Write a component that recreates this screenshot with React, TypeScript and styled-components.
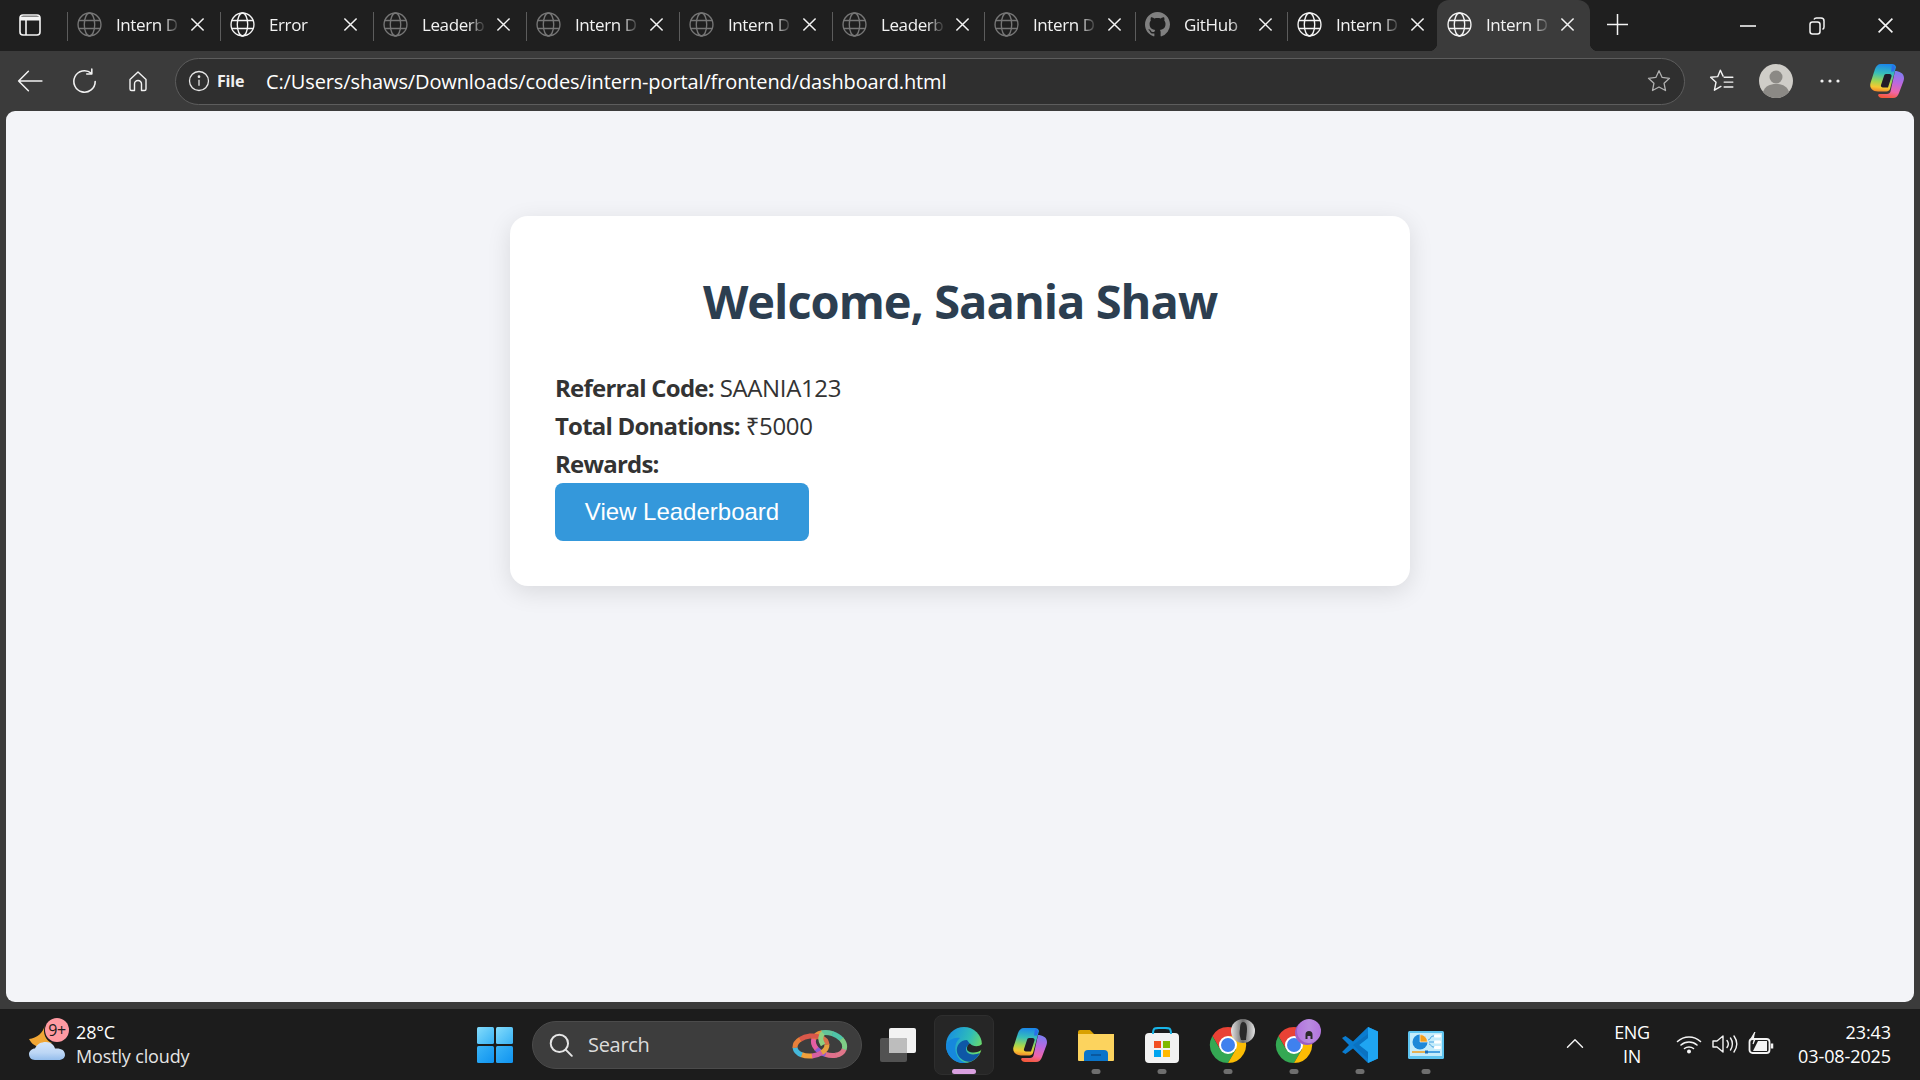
import React from "react";
import styled, { createGlobalStyle } from "styled-components";

const Global = createGlobalStyle`
  html, body { margin: 0; padding: 0; width: 1920px; height: 1080px; overflow: hidden; background: #3b3b3b; }
  * { box-sizing: border-box; }
  body { font-family: "Open Sans", "Noto Sans", sans-serif; }
`;

const Frame = styled.div`
  width: 1920px; height: 1080px; display: flex; flex-direction: column; background: #3b3b3b;
`;
const TabStrip = styled.div`
  height: 51px; flex: none; background: #1f1f1f; display: flex; align-items: stretch; color: #fff;
`;
const WindowMenu = styled.div`
  width: 67px; flex: none; display: flex; align-items: center; justify-content: center; padding: 0 7px 2px 0;
`;
const Tab = styled.div<{ $active?: boolean; $width: number }>`
  position: relative; width: ${(p) => p.$width}px; flex: none; display: flex; align-items: center; padding: 0 0 3px 10px;
  background: ${(p) => (p.$active ? "#3b3b3b" : "transparent")};
  border-radius: ${(p) => (p.$active ? "12px 12px 0 0" : "0")};
  &::before { content: ""; position: absolute; top: 12px; height: 29px; left: 0; width: 1px; background: #5c5c5c; }
  ${(p) => p.$active && `
    &::before { top: auto; height: 8px; bottom: 0; left: -8px; width: 8px; background: radial-gradient(circle at 0 0, transparent 8px, #3b3b3b 8.5px); }
    &::after { content: ""; position: absolute; bottom: 0; right: -8px; width: 8px; height: 8px; background: radial-gradient(circle at 100% 0, transparent 8px, #3b3b3b 8.5px); }
  `}
`;
const TabTitle = styled.span`
  margin-left: 14px; width: 66px; flex: none; white-space: nowrap; font-size: 17px; letter-spacing: -0.4px; color: #f2f2f2;
  -webkit-mask-image: linear-gradient(90deg, #000 70%, rgba(0, 0, 0, 0.18) 92%);
  mask-image: linear-gradient(90deg, #000 70%, rgba(0, 0, 0, 0.18) 92%);
`;
const TabClose = styled.span`
  margin-left: 5px; display: flex; width: 20px; justify-content: center;
`;
const PlusButton = styled.div`
  width: 50px; margin-left: 2px; display: flex; align-items: center; justify-content: center; padding-bottom: 3px;
`;
const WindowButtons = styled.div`
  margin-left: auto; display: flex;
`;
const WindowButton = styled.div`
  width: 69px; display: flex; align-items: center; justify-content: center;
`;
const Toolbar = styled.div`
  height: 60px; flex: none; background: #3b3b3b; display: flex; align-items: center; padding-left: 3px; color: #fff;
`;
const ToolButton = styled.div`
  width: 54px; height: 47px; flex: none; display: flex; align-items: center; justify-content: center;
`;
const CopilotButton = styled(ToolButton)`
  margin-left: 3px;
`;
const AddressBar = styled.div`
  width: 1510px; height: 47px; margin: 0 10px; flex: none; border: 1.5px solid #5d5d5d; border-radius: 24px; background: #2f2f2f;
  display: flex; align-items: center; padding: 0 12px 0 12px;
`;
const FileChip = styled.span`
  font-size: 16px; font-weight: 700; letter-spacing: -0.2px; margin-left: 7px; width: 49px; color: #f0f0f0;
`;
const Url = styled.span`
  font-size: 20px; letter-spacing: -0.12px; color: #fff; white-space: nowrap; flex: 1;
`;
const Content = styled.main`
  flex: none; height: 891px; margin: 0 6px; background: #f3f4f8; border-radius: 9px; padding-top: 105px;
`;
const Card = styled.section`
  width: 900px; height: 370px; margin: 0 auto; background: #fff; border-radius: 18px; padding: 45px;
  box-shadow: 0 6px 24px rgba(0, 0, 0, 0.11);
`;
const Title = styled.h1`
  margin: 0 0 28px; height: 80px; line-height: 80px; text-align: center; font-size: 47px; font-weight: 700; color: #2c3e50; letter-spacing: -1px;
`;
const InfoRow = styled.p`
  margin: 0; height: 38px; line-height: 38px; font-size: 24px; color: #333; letter-spacing: -0.36px; font-weight: 400;
  strong { font-weight: 700; letter-spacing: -0.78px; }
`;
const PrimaryButton = styled.button`
  display: block; width: 254px; height: 58px; border: 0; border-radius: 8px; background: #3498db; color: #fff; padding: 0;
  font-family: "Liberation Sans", Arial, sans-serif; font-size: 24px;
`;
const Taskbar = styled.footer`
  margin-top: 7px; height: 71px; flex: none; background: #1c1c1c; display: flex; align-items: center; color: #fff;
`;
const Weather = styled.div`
  width: 461px; flex: none; display: flex; align-items: center; padding-left: 28px; position: relative; margin-top: -2px;
`;
const WeatherBadge = styled.span`
  position: absolute; left: 45px; top: -2px; width: 24px; height: 24px; border-radius: 50%; background: #ff9aa2; color: #1c1c1c;
  font-size: 16px; line-height: 24px; text-align: center; letter-spacing: -0.5px;
`;
const WeatherText = styled.div`
  margin-left: 10px; display: flex; flex-direction: column; font-size: 18px; line-height: 24px; letter-spacing: -0.15px;
  span + span { color: #e4e4e4; }
`;
const TaskTile = styled.div<{ $active?: boolean; $running?: string }>`
  position: relative; width: 66px; height: 60px; flex: none; display: flex; align-items: center; justify-content: center;
  &::before { content: ""; position: absolute; left: 3px; right: 3px; top: 0; bottom: 0; border-radius: 8px;
    background: ${(p) => (p.$active ? "#262626" : "transparent")}; border: ${(p) => (p.$active ? "1px solid #2e2e2e" : "none")}; }
  &::after { content: ""; position: absolute; bottom: 1px; left: 50%; height: 5px; border-radius: 3px; transform: translateX(-50%);
    width: ${(p) => (p.$active ? "24px" : p.$running ? "9px" : "0")}; background: ${(p) => p.$running || "transparent"}; }
  > svg { position: relative; z-index: 1; }
`;
const StartTile = styled(TaskTile)`
  padding-left: 1px;
`;
const SearchBox = styled.div`
  width: 330px; height: 48px; margin: 0 3px 0 5px; flex: none; background: #3d3d3d; border: 1px solid #4b4b4b; border-radius: 24px;
  display: flex; align-items: center; padding: 0 13px 0 15px; color: #dcdcdc; font-size: 20px; letter-spacing: -0.3px;
`;
const SearchLabel = styled.span`
  margin-left: 14px; flex: 1;
`;
const Tray = styled.div`
  margin-left: auto; display: flex; align-items: center; padding-right: 29px; margin-top: -2px;
`;
const TrayIcon = styled.div`
  width: 36px; display: flex; justify-content: center;
`;
const Chevron = styled(TrayIcon)`
  margin-right: 9px;
`;
const Lang = styled.div`
  width: 60px; margin-right: 9px; text-align: center; font-size: 18px; line-height: 24px; letter-spacing: -0.3px;
`;
const Clock = styled.div`
  margin-left: 16px; width: 96px; text-align: right; font-size: 18px; line-height: 24px; letter-spacing: -0.1px; white-space: nowrap;
`;

const Globe = ({ dim }: { dim?: boolean }) => (
  <svg width="25" height="25" viewBox="0 0 24 24" fill="none" stroke={dim ? "#767676" : "#f4f4f4"} strokeWidth="1.3">
    <circle cx="12" cy="12" r="11" />
    <ellipse cx="12" cy="12" rx="5" ry="11" />
    <path d="M1.6 8.2h20.8M1.6 15.8h20.8" />
  </svg>
);
const GitHubMark = () => (
  <svg width="25" height="25" viewBox="0 0 16 16" fill="#808080">
    <path d="M8 0C3.58 0 0 3.58 0 8c0 3.54 2.29 6.53 5.47 7.59.4.07.55-.17.55-.38 0-.19-.01-.82-.01-1.49-2.01.37-2.53-.49-2.69-.94-.09-.23-.48-.94-.82-1.13-.28-.15-.68-.52-.01-.53.63-.01 1.08.58 1.23.82.72 1.21 1.87.87 2.33.66.07-.52.28-.87.51-1.07-1.78-.2-3.64-.89-3.64-3.95 0-.87.31-1.59.82-2.15-.08-.2-.36-1.02.08-2.12 0 0 .67-.21 2.2.82.64-.18 1.32-.27 2-.27s1.36.09 2 .27c1.53-1.04 2.2-.82 2.2-.82.44 1.1.16 1.92.08 2.12.51.56.82 1.27.82 2.15 0 3.07-1.87 3.75-3.65 3.95.29.25.54.73.54 1.48 0 1.07-.01 1.93-.01 2.2 0 .21.15.46.55.38A8.01 8.01 0 0 0 16 8c0-4.42-3.58-8-8-8z" />
  </svg>
);
const Cross = ({ s = 15, w = 1.6 }: { s?: number; w?: number }) => (
  <svg width={s} height={s} viewBox="0 0 16 16" stroke="#f4f4f4" strokeWidth={w} fill="none"><path d="M1.5 1.5l13 13M14.5 1.5l-13 13" /></svg>
);
const Line = ({ children, w = 24, sw = 1.5, c = "#f2f2f2" }: { children: React.ReactNode; w?: number; sw?: number; c?: string }) => (
  <svg width={w} height={w} viewBox="0 0 24 24" fill="none" stroke={c} strokeWidth={sw} strokeLinecap="round" strokeLinejoin="round">{children}</svg>
);
const Copilot = ({ s = 36, id }: { s?: number; id: string }) => (
  <svg width={s} height={s} viewBox="0 0 36 36">
    <defs>
      <linearGradient id={id + "a"} x1="0.5" y1="0" x2="0.4" y2="1">
        <stop offset="0" stopColor="#1b87ea" /><stop offset="0.35" stopColor="#38bfb8" /><stop offset="0.65" stopColor="#a6d64e" /><stop offset="0.85" stopColor="#f6c832" /><stop offset="1" stopColor="#f28a2c" />
      </linearGradient>
      <linearGradient id={id + "b"} x1="0.6" y1="0" x2="0.4" y2="1">
        <stop offset="0" stopColor="#7d7df0" /><stop offset="0.4" stopColor="#bb68e0" /><stop offset="0.75" stopColor="#f066a8" /><stop offset="1" stopColor="#f4593c" />
      </linearGradient>
    </defs>
    <path d="M12 1h11c2 0 3.500 1 4 3l-6 22c-.5 1.500-2 2.500-3.500 2.500H9C4 28.500 0 25 1.500 20L6 6c1-3 3-5 6-5z" fill={`url(#${id}a)`} />
    <path d="M26 8c4 0 9 2 9 7 0 1-.2 2-.5 3L30 30c-1 3-3 5-6 5H13c-2 0-3.500-1-4-3l1-1h8c2 0 3-1 3.500-2.500z" fill={`url(#${id}b)`} />
    <path d="M23 2c2 .5 3 1.500 3 3l-1 3.500h-3z" fill="#2a6fe8" />
    <path d="M15 13l-3 9c-.5 1.500.5 2.500 2 2.500h5l3.500-11c.4-1.500-.5-2.500-2-2.500h-3.500c-1 0-1.700.8-2 2z" fill="#211a27" />
  </svg>
);
const EdgeLogo = () => (
  <svg width="36" height="36" viewBox="0 0 36 36">
    <defs>
      <linearGradient id="edgeA" x1="0.1" y1="0.2" x2="1" y2="0.6"><stop offset="0" stopColor="#1a94dd" /><stop offset="0.55" stopColor="#2fbdb8" /><stop offset="1" stopColor="#74dd5e" /></linearGradient>
    </defs>
    <circle cx="18" cy="18" r="18" fill="url(#edgeA)" />
    <path d="M0 18C2 13 8 10 14 11 10 14 8 20 10 26 12 32 16 35 21 36 9 37.500 0 29 0 18z" fill="#1688dd" />
    <path d="M21 13C14 13 10 19 11 25 12 31 19 36 25 34.500 29 33 32 30 34 26 29 28 23 28 21 25 19 22 20 19 24 17z" fill="#0e57a6" />
    <path d="M24 16.500C21 18 20 22 22 24 26 26.500 32 26 36 22.500L36 17C33 20 27 20 24 16.500z" fill="#252525" />
  </svg>
);
const ChromeLogo = ({ id, photo, ring, figure }: { id: string; photo: [string, string]; ring?: string; figure: string }) => (
  <svg width="56" height="54" viewBox="-8 -4 56 54">
    <defs>
      <linearGradient id={id} x1="0" y1="0" x2="1" y2="0">
        <stop offset="0" stopColor={photo[0]} /><stop offset="0.5" stopColor={photo[1]} /><stop offset="1" stopColor={photo[0]} />
      </linearGradient>
    </defs>
    <path d="M4.400 14A18 18 0 0 1 35.600 14H20L12.200 27.500z" fill="#e94235" />
    <path d="M4.400 14L12.200 27.500H27.800L20 41A18 18 0 0 1 4.400 14z" fill="#34a853" />
    <path d="M35.600 14A18 18 0 0 1 20 41L27.800 27.500 20 14z" fill="#fbbc04" />
    <circle cx="20" cy="23" r="9" fill="#fff" />
    <circle cx="20" cy="23" r="7" fill="#3f81ee" />
    {ring && <circle cx="33" cy="11" r="12" fill={ring} />}
    <circle cx="35" cy="9" r="12" fill={`url(#${id})`} />
    <path d={figure} fill="#2a2a2a" />
  </svg>
);
const Ring = ({ cx, cy, rx, ry, rot, colors }: { cx: number; cy: number; rx: number; ry: number; rot: number; colors: string[] }) => (
  <g transform={`rotate(${rot} ${cx} ${cy})`} fill="none" strokeWidth="5">
    {colors.map((c, i) => {
      const seg = 100 / colors.length;
      return <ellipse key={i} cx={cx} cy={cy} rx={rx} ry={ry} stroke={c} pathLength={100} strokeDasharray={`${seg + 0.5} ${100 - seg - 0.5}`} strokeDashoffset={-i * seg} />;
    })}
  </g>
);

const tabs: { title: string; width: number; dim?: boolean; gh?: boolean; active?: boolean }[] = [
  { title: "Intern D", width: 153, dim: true },
  { title: "Error", width: 153 },
  { title: "Leaderb", width: 153, dim: true },
  { title: "Intern D", width: 153, dim: true },
  { title: "Intern D", width: 153, dim: true },
  { title: "Leaderb", width: 152, dim: true },
  { title: "Intern D", width: 151, dim: true },
  { title: "GitHub", width: 152, gh: true },
  { title: "Intern D", width: 150 },
  { title: "Intern D", width: 153, active: true },
];

export default function App() {
  return (
    <Frame>
      <Global />
      <TabStrip>
        <WindowMenu>
          <svg width="22" height="24" viewBox="0 0 22 24" fill="none" stroke="#f4f4f4" strokeWidth="1.6">
            <rect x="1" y="2" width="20" height="20" rx="3" />
            <path d="M1 5.500h20" strokeWidth="4" />
            <path d="M7 7v15" />
          </svg>
        </WindowMenu>
        {tabs.map((t, i) => (
          <Tab key={i} $active={t.active} $width={t.width}>
            {t.gh ? <GitHubMark /> : <Globe dim={t.dim} />}
            <TabTitle>{t.title}</TabTitle>
            <TabClose><Cross /></TabClose>
          </Tab>
        ))}
        <PlusButton>
          <svg width="21" height="21" viewBox="0 0 21 21" stroke="#f4f4f4" strokeWidth="1.5"><path d="M10.500 0v21M0 10.500h21" /></svg>
        </PlusButton>
        <WindowButtons>
          <WindowButton><svg width="16" height="16" viewBox="0 0 16 16" stroke="#f4f4f4" strokeWidth="1.6"><path d="M0 8h16" /></svg></WindowButton>
          <WindowButton>
            <svg width="16" height="18" viewBox="0 0 16 18" fill="none" stroke="#f4f4f4" strokeWidth="1.5"><rect x="1" y="5" width="10" height="12" rx="2.500" /><path d="M5 2.500c.4-1 1.200-1.500 2.500-1.500H12c1.800 0 3 1.200 3 3v6c0 1.200-.5 2-1.500 2.400" /></svg>
          </WindowButton>
          <WindowButton><Cross s={17} w={1.5} /></WindowButton>
        </WindowButtons>
      </TabStrip>
      <Toolbar>
        <ToolButton>
          <Line w={26} sw={1.4}><path d="M23 12H1.500M10.500 3l-9 9 9 9" /></Line>
        </ToolButton>
        <ToolButton>
          <Line w={27} sw={1.4}><path d="M21.500 12a9.500 9.500 0 1 1-3.500-7.400M18.500 1v4.300h-4.500" /></Line>
        </ToolButton>
        <ToolButton>
          <Line w={24} sw={1.4}><path d="M4 10.500L12 3l8 7.500V20a1.500 1.500 0 0 1-1.500 1.500h-3V15a3.500 3.500 0 0 0-7 0v6.500h-3A1.500 1.500 0 0 1 4 20z" /></Line>
        </ToolButton>
        <AddressBar>
          <svg width="22" height="22" viewBox="0 0 22 22" fill="none" stroke="#e6e6e6" strokeWidth="1.3"><circle cx="11" cy="11" r="9.500" /><path d="M11 9.800v6" /><circle cx="11" cy="6.700" r=".7" fill="#e6e6e6" /></svg>
          <FileChip>File</FileChip>
          <Url>C:/Users/shaws/Downloads/codes/intern-portal/frontend/dashboard.html</Url>
          <Line w={26} sw={1.2} c="#b0b0b0"><path d="M12 2.500l2.900 6.200 6.800.8-5 4.600 1.300 6.700L12 17.500l-6 3.300 1.300-6.700-5-4.600 6.800-.8z" /></Line>
        </AddressBar>
        <ToolButton>
          <Line w={26} sw={1.3}><path d="M13 7.500L10.500 2 8 8l-6.500.6 5 4.500-1.500 7.400 6-3.500M14 8.500h8M14 13h8M14 17.500h8" /></Line>
        </ToolButton>
        <ToolButton>
          <svg width="34" height="34" viewBox="0 0 34 34"><circle cx="17" cy="17" r="17" fill="#cfcdc8" /><circle cx="17" cy="13" r="6.500" fill="#8b8985" /><path d="M4 28c2-6 7-8 13-8s11 2 13 8a17 17 0 0 1-26 0z" fill="#8b8985" /></svg>
        </ToolButton>
        <ToolButton>
          <svg width="20" height="4" viewBox="0 0 20 4" fill="#f0f0f0"><circle cx="2" cy="2" r="1.600" /><circle cx="10" cy="2" r="1.600" /><circle cx="18" cy="2" r="1.600" /></svg>
        </ToolButton>
        <CopilotButton>
          <Copilot s={36} id="cpTop" />
        </CopilotButton>
      </Toolbar>
      <Content>
        <Card>
          <Title>Welcome, Saania Shaw</Title>
          <InfoRow><strong>Referral Code:</strong> SAANIA123</InfoRow>
          <InfoRow><strong>Total Donations:</strong> ₹5000</InfoRow>
          <InfoRow><strong>Rewards:</strong></InfoRow>
          <PrimaryButton>View Leaderboard</PrimaryButton>
        </Card>
      </Content>
      <Taskbar>
        <Weather>
          <svg width="38" height="42" viewBox="0 0 38 42">
            <defs><linearGradient id="cloud" x1="0" y1="0" x2="0" y2="1"><stop offset="0" stopColor="#d5e6fa" /><stop offset="0.6" stopColor="#bcd6f5" /><stop offset="1" stopColor="#94bdec" /></linearGradient></defs>
            <path d="M17 2C15 10 9 15 1 16 4 22 10 25 16 24L24 20C18 18 14 10 17 2z" fill="#f0a635" />
            <path d="M7 37C3 37 1 34 1 31 1 28 4 25.500 7 25.500 9 21 13 19 18 19 23 19 26 22 27 25.500 33 25 37 27 37 32 37 35 34 37 30 37z" fill="url(#cloud)" />
          </svg>
          <WeatherBadge>9+</WeatherBadge>
          <WeatherText><span>28°C</span><span>Mostly cloudy</span></WeatherText>
        </Weather>
        <StartTile>
          <svg width="36" height="36" viewBox="0 0 36 36">
            <defs>
              <linearGradient id="winA" x1="0" y1="0" x2="1" y2="1"><stop offset="0" stopColor="#84dcfb" /><stop offset="1" stopColor="#38b2f6" /></linearGradient>
              <linearGradient id="winB" x1="0" y1="0" x2="1" y2="1"><stop offset="0" stopColor="#3ab4f6" /><stop offset="1" stopColor="#0f93f0" /></linearGradient>
            </defs>
            <rect width="17" height="17" rx="1.500" fill="url(#winA)" /><rect x="19" width="17" height="17" rx="1.500" fill="url(#winA)" /><rect y="19" width="17" height="17" rx="1.500" fill="url(#winB)" /><rect x="19" y="19" width="17" height="17" rx="1.500" fill="url(#winB)" />
          </svg>
        </StartTile>
        <SearchBox>
          <Line w={26} sw={1.800} c="#e6e6e6"><circle cx="10.500" cy="10.500" r="8" /><path d="M16.500 16.500L22 22" /></Line>
          <SearchLabel>Search</SearchLabel>
          <svg width="56" height="32" viewBox="0 0 56 32">
            <Ring cx={37} cy={15} rx={16} ry={11} rot={18} colors={["#e0768a", "#e0708c", "#8a5cd6", "#e45fa2", "#e8913c", "#62c39a", "#4fc4a8", "#7fcf86"]} />
            <Ring cx={19} cy={17} rx={16} ry={10} rot={-6} colors={["#e8a040", "#d660a0", "#f0a03c", "#45b9dc", "#e8803a", "#d9584a", "#d9584a", "#d9704a"]} />
            <path d="M31 4c-3 3-3 7 0 12" fill="none" stroke="#8fcf80" strokeWidth="5" />
          </svg>
        </SearchBox>
        <TaskTile>
          <svg width="36" height="34" viewBox="0 0 36 34"><rect x="9" y="0" width="27" height="25" rx="2" fill="#f2f2f2" /><rect x="0" y="10" width="27" height="24" rx="2" fill="#5c5c5c" fillOpacity="0.85" /><path d="M9 10h16a2 2 0 0 1 2 2v13H9z" fill="#bdbdbd" /></svg>
        </TaskTile>
        <TaskTile $active $running="#d9a0e0"><EdgeLogo /></TaskTile>
        <TaskTile><Copilot s={36} id="cpBar" /></TaskTile>
        <TaskTile $running="#6e6e6e">
          <svg width="36" height="34" viewBox="0 0 36 34"><path d="M0 4a2 2 0 0 1 2-2h10l4 4h18a2 2 0 0 1 2 2v2H0z" fill="#d9a100" /><path d="M0 6h36v26a1 1 0 0 1-1 1H1a1 1 0 0 1-1-1z" fill="#fcd35e" /><path d="M6 33V26a4 4 0 0 1 4-4h16a4 4 0 0 1 4 4v7z" fill="#0b74c9" /><path d="M13 27h10" stroke="#0a4f90" strokeWidth="1.500" /></svg>
        </TaskTile>
        <TaskTile $running="#6e6e6e">
          <svg width="36" height="36" viewBox="0 0 36 36"><rect x="1" y="6" width="34" height="30" rx="4" fill="#f2f2f2" /><path d="M9 7c0-7 2-6 9-6s9-1 9 6" fill="none" stroke="#18b5e8" strokeWidth="2" /><rect x="10" y="14" width="7" height="7" fill="#f25022" /><rect x="19" y="14" width="7" height="7" fill="#7fba00" /><rect x="10" y="23" width="7" height="7" fill="#00a4ef" /><rect x="19" y="23" width="7" height="7" fill="#ffb900" /></svg>
        </TaskTile>
        <TaskTile $running="#6e6e6e">
          <ChromeLogo id="photoA" photo={["#e4e4e4", "#6a6a6a"]} figure="M35 0c3 0 4 3 4 7s-1 8-1 11h-5c-1-4-2-6-1-11 0-4 1-7 3-7z" />
        </TaskTile>
        <TaskTile $running="#6e6e6e">
          <ChromeLogo id="photoB" photo={["#b274dd", "#b98be0"]} ring="#9a5ec8" figure="M35 9a3.500 3.500 0 0 1 3.500 3.500V17h-2v-3h-3v3h-2v-4.500A3.500 3.500 0 0 1 35 9z" />
        </TaskTile>
        <TaskTile $running="#6e6e6e">
          <svg width="36" height="36" viewBox="0 0 36 36"><path d="M26 0l10 4.500v27L26 36 11 21.500 3.500 27 0 25l7-7-7-7 3.500-2L11 14.500z" fill="#0a7cd0" /><path d="M26 0l10 4.500v27L26 36V25l-9-7 9-7z" fill="#1fa5f2" /><path d="M26 25L17 18l9-7 0-4-15 11 15 14z" fill="#0a6cb8" opacity="0.6" /></svg>
        </TaskTile>
        <TaskTile $running="#6e6e6e">
          <svg width="36" height="28" viewBox="0 0 36 28">
            <rect width="36" height="28" rx="1.500" fill="#5ec4f0" /><rect x="2" y="2" width="32" height="23" fill="#c4ecfb" />
            <circle cx="12" cy="11" r="7.500" fill="#1e88d8" /><path d="M12 11V3.500a7.500 7.500 0 0 1 7.500 7.500z" fill="#f29f1d" stroke="#fff" strokeWidth=".6" />
            <path d="M20 9c3 0 2-4 5-4h2M21 11h6M21 13c2 0 2 3 4 3h2" stroke="#3d9bdc" strokeWidth=".9" fill="none" />
            <rect x="26" y="3.500" width="7" height="3" rx="1" fill="#fff" /><rect x="26" y="9.500" width="7" height="3" rx="1" fill="#fff" /><rect x="26" y="15" width="7" height="3" rx="1" fill="#fff" />
            <path d="M4 21h14" stroke="#f29f1d" strokeWidth="1.500" /><path d="M18 21h14" stroke="#1e88d8" strokeWidth="1.500" /><rect x="17" y="19.500" width="3" height="3" fill="#1e6fb8" />
          </svg>
        </TaskTile>
        <Tray>
          <Chevron><Line w={20} sw={1.700}><path d="M3 16l9-9 9 9" /></Line></Chevron>
          <Lang>ENG<br />IN</Lang>
          <TrayIcon>
            <svg width="26" height="20" viewBox="0 0 26 20" fill="none" stroke="#f4f4f4" strokeWidth="1.600" strokeLinecap="round"><path d="M1.500 7.500c6.500-6 16.500-6 23 0M5 11c4.500-4 11.500-4 16 0M8.500 14.500c2.500-2 6.500-2 9 0" /><circle cx="13" cy="17.500" r="1.200" fill="#f4f4f4" /></svg>
          </TrayIcon>
          <TrayIcon>
            <svg width="26" height="22" viewBox="0 0 26 22" fill="none" stroke="#f4f4f4" strokeWidth="1.400" strokeLinejoin="round" strokeLinecap="round"><path d="M1 8v6h4l6 5V3L5 8z" /><path d="M15 7.500c1.500 2 1.500 5 0 7M18.500 5c2.500 3.500 2.500 8.500 0 12M22 3c3.500 5 3.500 11 0 16" /></svg>
          </TrayIcon>
          <TrayIcon>
            <svg width="26" height="24" viewBox="0 0 26 24" fill="none" stroke="#f4f4f4" strokeWidth="1.800"><rect x="1.500" y="7" width="20" height="14" rx="3" /><path d="M24 11.500v5" strokeWidth="2.500" /><path d="M5 19l5-10h9v10z" fill="#f4f4f4" stroke="none" /><path d="M7 0L3 7h4l-2 5" strokeWidth="1.200" fill="#f4f4f4" /></svg>
          </TrayIcon>
          <Clock>23:43<br />03-08-2025</Clock>
        </Tray>
      </Taskbar>
    </Frame>
  );
}
